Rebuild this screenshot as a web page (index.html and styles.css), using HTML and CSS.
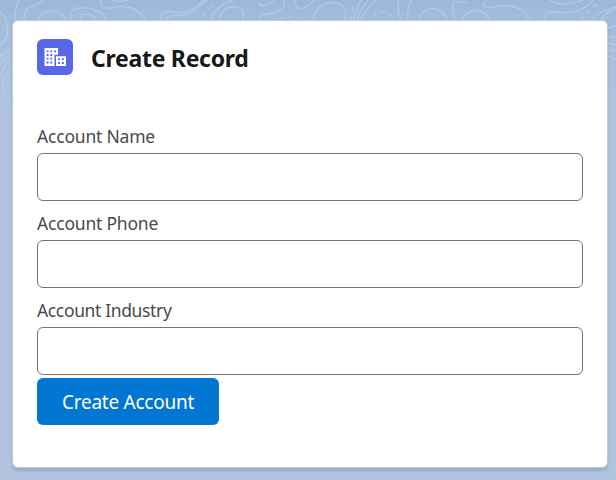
FILE: index.html
```
<!DOCTYPE html>
<html lang="en">
<head>
<meta charset="utf-8">
<title>Create Record</title>
<link rel="stylesheet" href="styles.css">
</head>
<body>
<svg class="contours" width="616" height="130" viewBox="0 0 616 130" aria-hidden="true">
  <g fill="none" stroke="#c0d2ea" stroke-opacity=".6" stroke-width="1.4">
    <path d="M0 12C7 17 8 25 7 35C6 40 3 43 0 45"/>
    <path d="M0 65C4 59 8 56 13 52M0 76C3 66 8 61 14 57M13 69C4 74 2 80 3 88C4 95 8 99 13 103"/>
    <path d="M0 57L9 49" stroke-dasharray="5 3"/>
    <path d="M15 21C16 15 14 7 19 0M24 20C24 13 26 7 33 6C40 4 41 1 43 0"/>
    <path d="M38 20C40 12 49 9 57 12C63 14 64 18 66 20M72 20C68 12 72 8 82 8C94 7 103 12 106 20M80 20C80 13 91 11 96 20"/>
    <path d="M101 0C100 7 105 9 113 8C125 4 138 8 146 20M112 0C117 3 123 1 128 0"/>
    <path d="M161 20C160 13 165 11 174 12C190 15 193 8 204 0M166 20C168 14 179 16 188 14C197 11 199 4 208 0"/>
    <path d="M210 20C214 12 221 3 233 0M219 20C220 10 230 5 239 8C244 11 245 15 242 20"/>
    <path d="M202 17L214 3M278 19C286 16 293 16 300 20" stroke-dasharray="6 4"/>
    <path d="M259 3C261 8 271 5 273 0M260 20C260 13 268 15 276 12C284 9 286 3 283 0M294 0C297 11 302 10 309 5L315 0"/>
    <path d="M314 20C314 11 320 4 329 3C339 1 346 6 346 14Q346 18 344 20"/>
    <path d="M354 20C354 11 359 5 361 0M357 20Q361 9 368 0M361 20Q366 8 377 0"/>
    <path d="M351 20L354 0M373 17C379 9 388 9 394 20" stroke-dasharray="5 4"/>
    <path d="M399 0C397 8 398 15 401 20M408 20C407 12 408 5 412 0M419 20C421 9 431 7 438 10C445 12 445 16 447 20"/>
    <path d="M454 20C455 13 450 9 454 2H468M463 20C464 13 472 9 480 11C486 13 488 16 489 20M487 0C480 4 484 9 492 7C511 3 525 8 529 20"/>
    <path d="M544 20C544 15 546 12 554 12C574 14 584 11 593 0M549 0C557 5 569 5 583 0M592 20C597 13 603 10 616 7M601 20C605 12 610 11 616 9"/>
    <path d="M580 20L595 6L600 0" stroke-dasharray="5 4"/>
    <path d="M608 28Q613 28 616 25M608 37H616M608 43L616 45M608 50L616 51M608 56L616 59"/>
  </g>
</svg>
<main class="card">
  <header class="card-header">
    <span class="icon">
      <svg width="36" height="36" viewBox="0 0 36 36" aria-hidden="true">
        <path fill="#fff" d="M7.5 9H21v6.8h-3.5V27h-10zM19 17.2h10V27H19z"/>
        <g fill="#5867e8">
          <path d="M9.6 11.4h1.9v1.9H9.6zm3.7 0h1.9v1.9h-1.9zm3.7 0h1.9v1.9H17zM9.6 15h1.9v1.9H9.6zm3.7 0h1.9v1.9h-1.9zM9.6 18.7h1.9v1.9H9.6zm3.7 0h1.9v1.9h-1.9zM9.6 22.5h1.9v1.9H9.6zm3.7 0h1.9v1.9h-1.9z"/>
          <path d="M21 19.3h1.9v1.9H21zm3.9 0h1.9v1.9h-1.9zM21 23h1.9v1.9H21zm3.9 0h1.9v1.9h-1.9z"/>
        </g>
      </svg>
    </span>
    <h1 class="title">Create Record</h1>
  </header>
  <form class="form">
    <label class="field"><span class="label">Account Name</span><input class="input" type="text"></label>
    <label class="field"><span class="label">Account Phone</span><input class="input" type="text"></label>
    <label class="field"><span class="label industry">Account Industry</span><input class="input" type="text"></label>
    <button class="button" type="button">Create Account</button>
  </form>
</main>
</body>
</html>
```
FILE: styles.css
```
* {
  box-sizing: border-box;
}

body {
  margin: 0;
  height: 480px;
  padding: 20px 8px 12px 12px;
  overflow: hidden;
  font-family: "Segoe UI", "Noto Sans", sans-serif;
  background: linear-gradient(#9bb8d8 0, #a4bddd 25px, #b0c4df 110px, #b0c4df 100%);
}

.contours {
  position: absolute;
  top: 0;
  left: 0;
}

.card {
  position: relative;
  height: 448px;
  padding: 18px 24px;
  background: #fff;
  border: 1px solid #c9c9c9;
  border-radius: 6px;
  box-shadow: 0 3px 3px rgba(0, 0, 0, .12);
}

.card-header {
  display: flex;
  align-items: center;
  gap: 18px;
  height: 36px;
}

.icon {
  width: 36px;
  height: 36px;
  border-radius: 6px;
  background: #5867e8;
}

.icon svg {
  display: block;
}

.title {
  margin: 1px 0 0;
  font-size: 23px;
  line-height: 36px;
  font-weight: 700;
  letter-spacing: -.28px;
  color: #181818;
}

.form {
  margin-top: 48px;
}

.field {
  display: block;
  height: 87px;
}

.label {
  display: block;
  height: 30px;
  font-size: 17.5px;
  line-height: 26px;
  letter-spacing: -.2px;
  color: #4a4a4a;
}

.industry {
  letter-spacing: -.36px;
}

.input {
  display: block;
  width: 100%;
  height: 48px;
  padding: 0 16px;
  border: 1px solid #747474;
  border-radius: 6px;
  background: #fff;
  font: inherit;
}

.button {
  display: block;
  width: 182px;
  height: 47px;
  margin-top: -6px;
  padding: 2px 0 0;
  border: 0;
  border-radius: 6px;
  background: #0176d3;
  color: #fff;
  font-family: inherit;
  font-size: 19px;
  line-height: 45px;
  letter-spacing: -.25px;
}
```
